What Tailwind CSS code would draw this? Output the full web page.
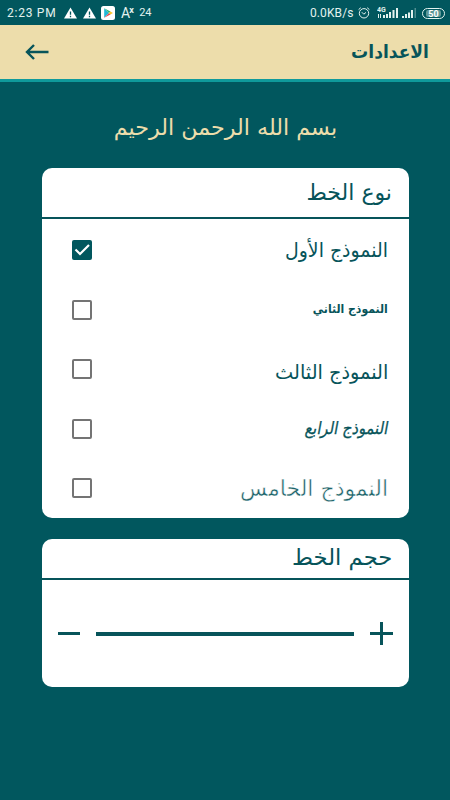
<!DOCTYPE html>
<html lang="ar">
<head>
<meta charset="utf-8">
<meta name="viewport" content="width=device-width">
<title>الاعدادات</title>
<script src="https://cdn.jsdelivr.net/npm/@tailwindcss/browser@4"></script>
</head>
<body class="w-[450px] h-[800px] overflow-hidden bg-[#01575e] font-['DejaVu_Sans',sans-serif] text-[#07545a]">
<header>
  <div class="h-[25px] flex items-center justify-between pl-[7px] pr-[5px] pt-px text-[#e3f2ef] font-[Roboto,sans-serif]">
    <div class="flex items-center h-[22px]">
      <span class="text-[12px] tracking-[0.75px] w-[57px] whitespace-nowrap">2:23 PM</span>
      <svg class="w-[13px] h-[12px] mr-[6px]" viewBox="0 0 13 12"><path d="M6.5 0.5L13 11.5H0Z" fill="#fff"/><path d="M6.5 4.5V7.7M6.5 8.8V10.2" stroke="#01575e" stroke-width="1.3"/></svg>
      <svg class="w-[13px] h-[12px] mr-[5px]" viewBox="0 0 13 12"><path d="M6.5 0.5L13 11.5H0Z" fill="#fff"/><path d="M6.5 4.5V7.7M6.5 8.8V10.2" stroke="#01575e" stroke-width="1.3"/></svg>
      <svg class="w-[14px] h-[14px] mr-[6px]" viewBox="0 0 14 14"><rect width="14" height="14" rx="2.5" fill="#fff"/><path d="M3.2 2.2V11.8L8 7Z" fill="#20b9d8"/><path d="M3.2 2.2L9.5 5.6L8 7Z" fill="#32b67a"/><path d="M3.2 11.8L9.5 8.4L8 7Z" fill="#e54c55"/><path d="M9.3 5.5L12 7L9.3 8.5L7.8 7Z" fill="#f8c52c"/></svg>
      <span class="text-[14px] leading-[14px]">A</span><span class="text-[9px] leading-[8px] font-bold -mt-[7px] w-[9px] -ml-px">x</span>
      <span class="text-[11px] ml-[1px]">24</span>
    </div>
    <div class="flex items-center h-[22px]">
      <span class="text-[12px] tracking-[0.1px] w-[48px] whitespace-nowrap">0.0KB/s</span>
      <svg class="w-[12px] h-[12px] mr-[7px]" viewBox="0 0 12 12" fill="none" stroke="#e3f2ef"><circle cx="6" cy="6.3" r="4.7"/><path d="M0.6 2.6L2.8 0.7M11.4 2.6L9.2 0.7M3.8 5.2L5.8 7.2L8 5.4"/></svg>
      <svg class="w-[21px] h-[13px] mr-[4px] -mt-[2px]" viewBox="0 0 21 13" fill="#e3f2ef"><text x="0" y="6" font-size="7" font-weight="bold" font-family="Roboto">4G</text><path d="M1 8h1v4h-1zM3 8h1v4h-1zM6 9h2v3H6zM9 8h2v4H9zM12 6h2v6h-2zM15.500 4h2v8h-2zM19 2h2v10h-2z"/></svg>
      <svg class="w-[15px] h-[13px] mr-[5px] -mt-[2px]" viewBox="0 0 15 13" fill="#e3f2ef"><path d="M0 10h2v2H0zM3 8h2v4H3zM6 6.500h2v5.500H6zM9 4h2v8H9z"/><path d="M12.500 2h1.500v10h-1.500z" opacity=".35"/></svg>
      <span class="w-[23px] h-[11px] rounded-[6px] border border-[#e3f2ef] flex items-center justify-center"><span class="px-[2px] h-[7px] rounded-[2px] bg-[#5e9797] text-[9px] leading-[8px] font-bold text-white">50</span></span>
    </div>
  </div>
  <div class="h-[57px] bg-[#edddab] border-b-[3px] border-[#0f9a9b] flex items-center justify-between pl-[25px] pr-[21px] pb-px">
    <svg class="w-[24px] h-[18px]" viewBox="0 0 24 18" fill="none" stroke="#07545a" stroke-width="2.400"><path d="M23.500 9H2M9 2L2 9L9 16"/></svg>
    <h1 dir="rtl" class="text-[18px] font-bold leading-[24px] whitespace-nowrap origin-right scale-x-[0.95]">الاعدادات</h1>
  </div>
</header>
<main class="pl-[42px] pr-[41px]">
  <p dir="rtl" class="h-[86px] pt-[32px] pr-[72px] text-[22px] leading-[28px] text-[#edddab] whitespace-nowrap"><span class="inline-block origin-right scale-x-[1.01]">بسم الله الرحمن الرحيم</span></p>
  <section class="h-[350px] rounded-[10px] bg-white" dir="rtl">
    <h2 class="h-[51px] border-b-2 border-[#07545a] pr-[17px] text-[22px] leading-[50px] whitespace-nowrap"><span class="inline-block origin-right">نوع الخط</span></h2>
    <ul class="pr-[21px] pl-[30px] pt-[1px]">
      <li class="h-[60px] flex items-center justify-between"><span class="text-[20px] origin-right scale-x-[0.945]">النموذج الأول</span>
        <svg class="w-[20px] h-[20px]" viewBox="0 0 20 20"><rect width="20" height="20" rx="2" fill="#01575e"/><path d="M3.500 9.500L8 14L17 5" fill="none" stroke="#fff" stroke-width="2.200"/></svg></li>
      <li class="h-[59px] flex items-center justify-between"><span class="text-[12px] font-bold origin-right scale-x-[0.905] pb-[2px]">النموذج الثاني</span><span class="w-[20px] h-[20px] border-2 border-[#747474] rounded-[2px]"></span></li>
      <li class="h-[60px] flex items-center justify-between"><span class="text-[20px] origin-right scale-x-[0.965] pt-[6px]">النموذج الثالث</span><span class="w-[20px] h-[20px] border-2 border-[#747474] rounded-[2px]"></span></li>
      <li class="h-[59px] flex items-center justify-between"><span class="text-[17px] origin-right scale-x-[0.87] -skew-x-12 [-webkit-text-stroke:0.3px_#07545a]">النموذج الرابع</span><span class="w-[20px] h-[20px] border-2 border-[#747474] rounded-[2px]"></span></li>
      <li class="h-[60px] flex items-center justify-between"><span class="text-[22px] origin-right text-[#1d6369] [-webkit-text-stroke:0.5px_white]">النموذج الخامس</span><span class="w-[20px] h-[20px] border-2 border-[#747474] rounded-[2px]"></span></li>
    </ul>
  </section>
  <section class="mt-[21px] h-[148px] rounded-[10px] bg-white" dir="rtl">
    <h2 class="h-[41px] border-b-2 border-[#07545a] pr-[17px] text-[22px] leading-[38px] whitespace-nowrap"><span class="inline-block origin-right scale-x-[1.03]">حجم الخط</span></h2>
    <div class="h-[107px] flex items-center justify-between pr-[16px] pl-[16px]">
      <svg class="w-[23px] h-[23px]" viewBox="0 0 23 23"><path d="M0 11.500H23M11.500 0V23" stroke="#07545a" stroke-width="3"/></svg>
      <span class="w-[258px] h-[4px] bg-[#07545a]"></span>
      <span class="w-[22px] h-[3px] bg-[#07545a]"></span>
    </div>
  </section>
</main>
</body>
</html>
